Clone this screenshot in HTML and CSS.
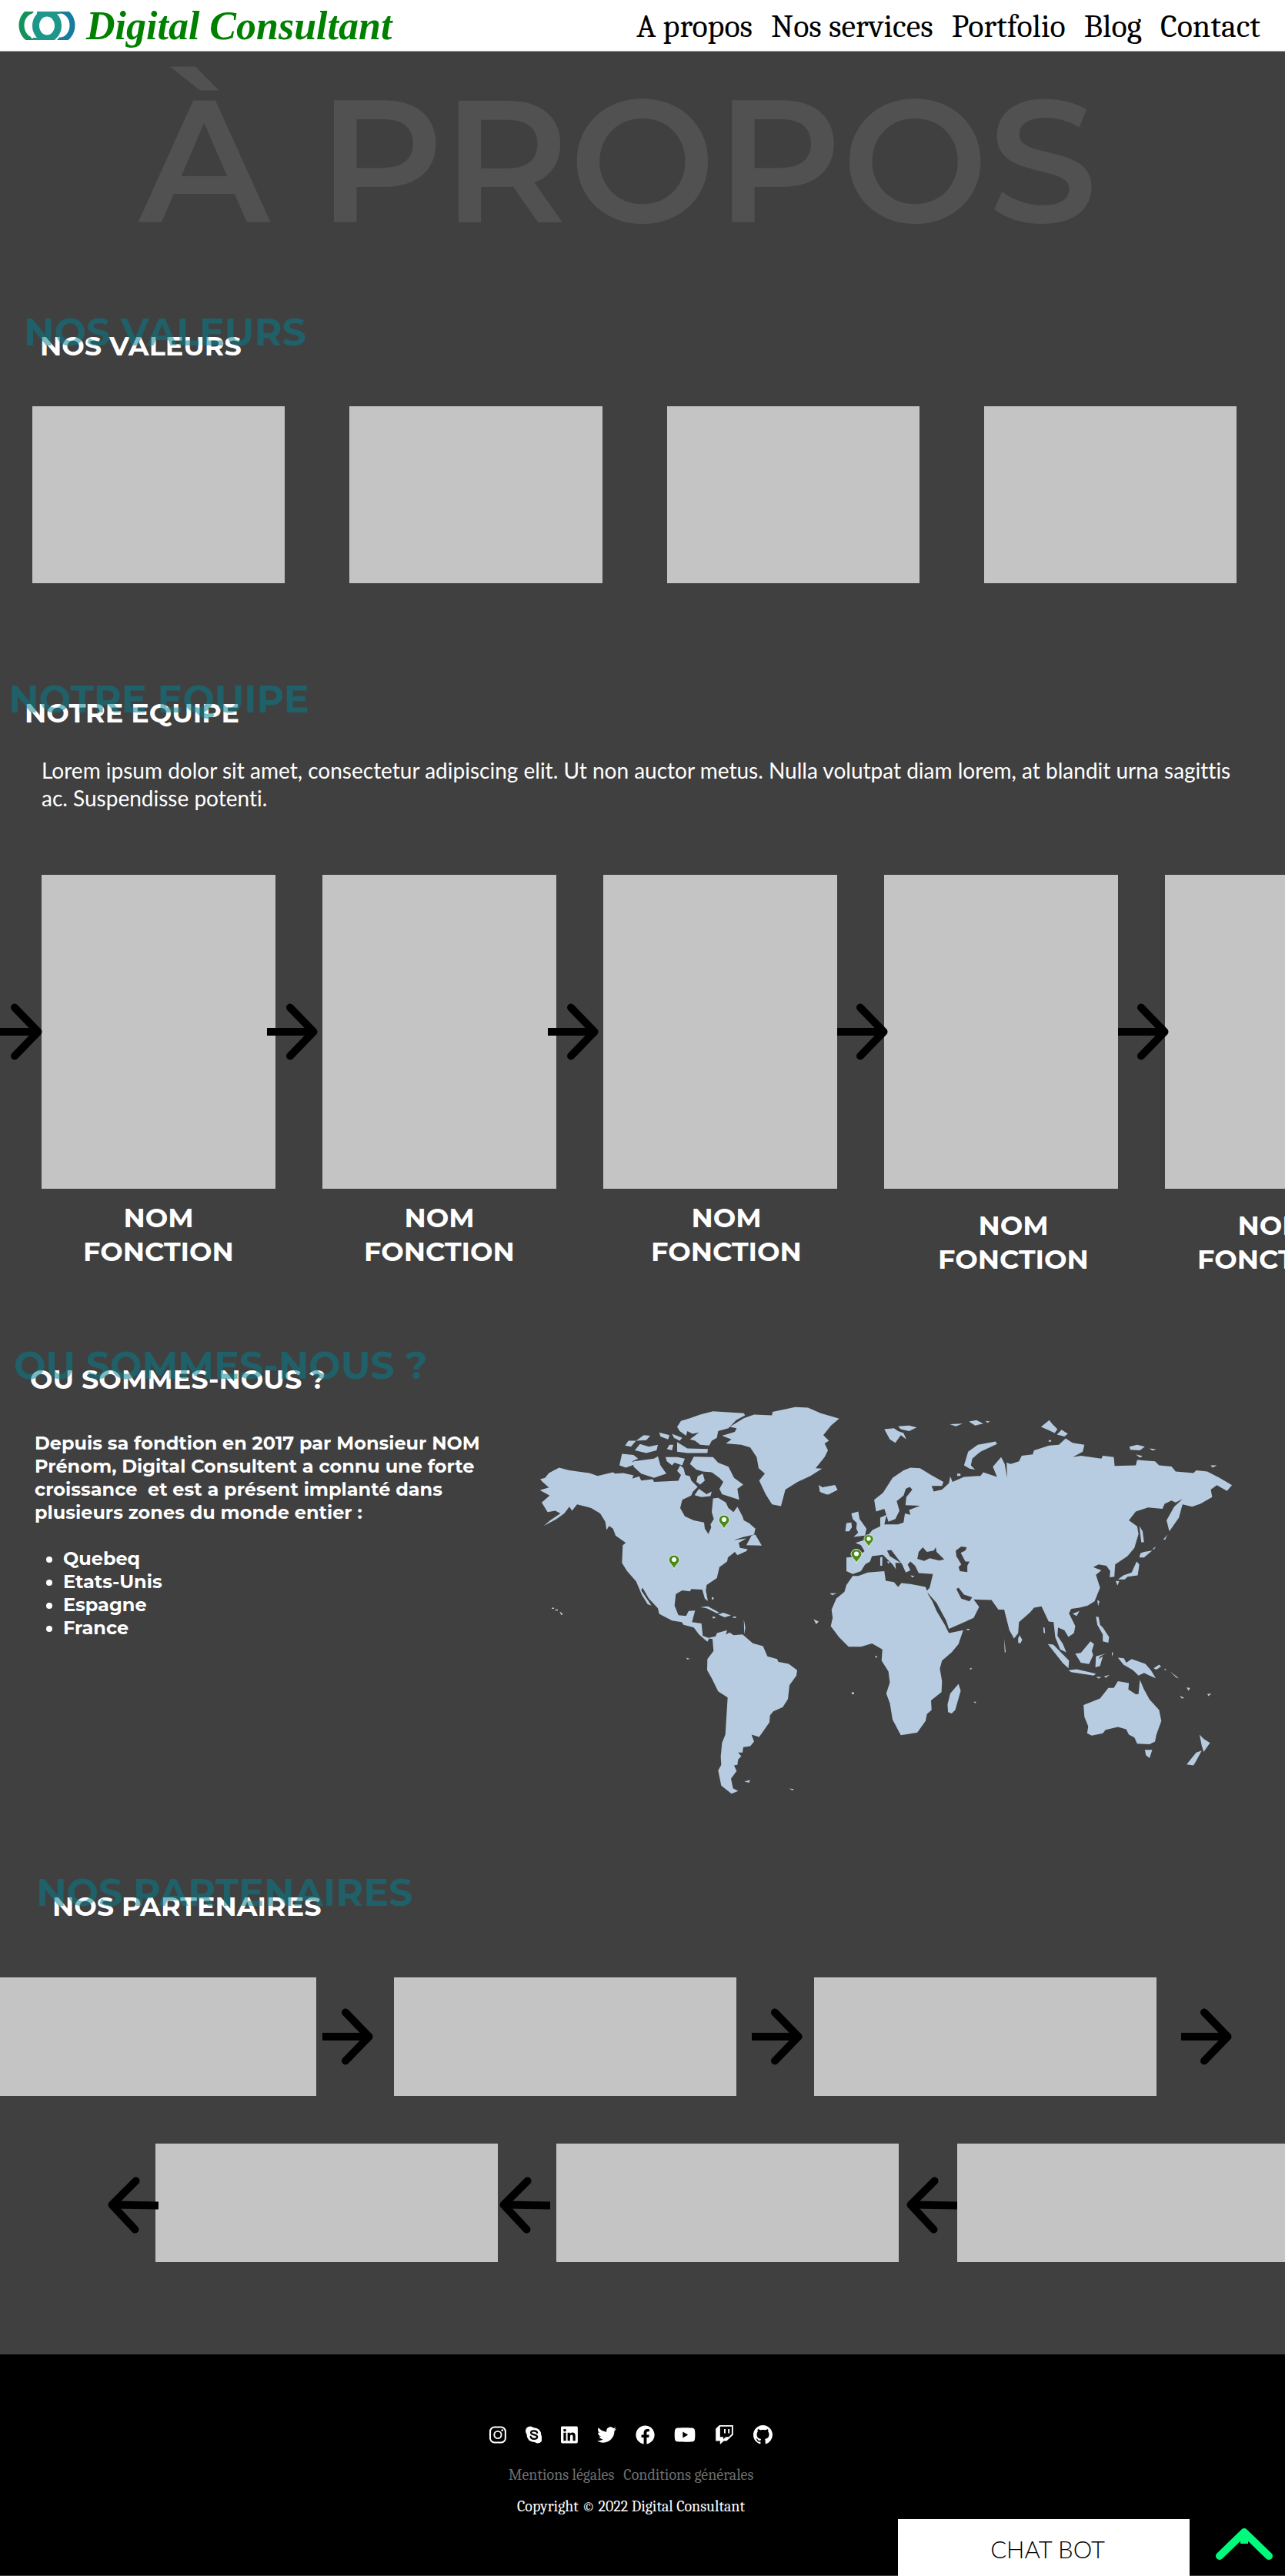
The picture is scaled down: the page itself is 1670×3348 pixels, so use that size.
FILE: index.html
```html
<!DOCTYPE html>
<html lang="fr">
<head>
<meta charset="utf-8">
<meta name="viewport" content="width=device-width, initial-scale=1">
<title>Digital Consultant - À propos</title>
<link rel="stylesheet" href="styles.css">
</head>
<body>
<svg class="sprite" aria-hidden="true">
  <symbol id="arrow" viewBox="0 0 66 74">
    <path d="M0 37H58" fill="none" stroke="currentColor" stroke-width="10"/>
    <path d="M30 5.500L60.500 37L30 68.500" fill="none" stroke="currentColor" stroke-width="10" stroke-linecap="round" stroke-linejoin="round"/>
  </symbol>
  <symbol id="arrow-left" viewBox="0 0 66 74">
    <g transform="rotate(181 33 37)">
      <path d="M0 37H58" fill="none" stroke="currentColor" stroke-width="10"/>
      <path d="M30 5.500L60.500 37L30 68.500" fill="none" stroke="currentColor" stroke-width="10" stroke-linecap="round" stroke-linejoin="round"/>
    </g>
  </symbol>
  <symbol id="pin" viewBox="0 0 16 20">
    <path d="M8 19C6 14 1 11 1 7.500A7 6.500 0 0 1 15 7.500C15 11 10 14 8 19Z" fill="#4a8a1c" stroke="#e4f0d8" stroke-width="1"/>
    <circle cx="8" cy="7" r="3" fill="#fff"/>
  </symbol>
</svg>

<header class="topbar">
  <a class="brand" href="#">
    <svg class="brand-mark" viewBox="0 0 74 37" aria-hidden="true">
      <ellipse cx="20" cy="18" rx="16" ry="19" fill="none" stroke="#14925c" stroke-width="7"/>
      <ellipse cx="54" cy="18" rx="16" ry="19" fill="none" stroke="#177d9c" stroke-width="7"/>
      <ellipse cx="37" cy="18.500" rx="20" ry="21" fill="#fff"/>
      <path d="M24 0H20L13 9L11 22L17 35H24ZM50 3H53L60 11V26L50 37H48Z" fill="#fff"/>
      <ellipse cx="37" cy="18.500" rx="14.500" ry="16.500" fill="none" stroke="#1c978a" stroke-width="9"/>
      <path d="M24 0H54V3H24ZM19 34H46V37H19Z" fill="#1c978a"/>
    </svg>
    <span class="brand-name">Digital Consultant</span>
  </a>
  <nav class="nav" aria-label="Navigation principale">
    <a href="#">A propos</a>
    <a href="#">Nos services</a>
    <a href="#">Portfolio</a>
    <a href="#">Blog</a>
    <a href="#">Contact</a>
  </nav>
</header>

<main>
  <h1 class="hero">À PROPOS</h1>

  <section class="values">
    <h2 class="title title--values">NOS VALEURS<span class="ghost" aria-hidden="true">NOS VALEURS</span></h2>
    <div class="values-grid">
      <div class="box"></div>
      <div class="box"></div>
      <div class="box"></div>
      <div class="box"></div>
    </div>
  </section>

  <section class="team">
    <h2 class="title title--team">NOTRE EQUIPE<span class="ghost" aria-hidden="true">NOTRE EQUIPE</span></h2>
    <p class="intro">Lorem ipsum dolor sit amet, consectetur adipiscing elit. Ut non auctor metus. Nulla volutpat diam lorem, at blandit urna sagittis ac. Suspendisse potenti.</p>
    <div class="team-strip">
      <figure class="member">
        <div class="portrait">
          <svg class="arrow arrow--before" aria-hidden="true"><use href="#arrow"/></svg>
          <svg class="arrow arrow--overlap" aria-hidden="true"><use href="#arrow"/></svg>
        </div>
        <figcaption class="caption">NOM<br>FONCTION</figcaption>
      </figure>
      <figure class="member">
        <div class="portrait"><svg class="arrow arrow--overlap" aria-hidden="true"><use href="#arrow"/></svg></div>
        <figcaption class="caption">NOM<br>FONCTION</figcaption>
      </figure>
      <figure class="member">
        <div class="portrait"><svg class="arrow" aria-hidden="true"><use href="#arrow"/></svg></div>
        <figcaption class="caption caption--right">NOM<br>FONCTION</figcaption>
      </figure>
      <figure class="member">
        <div class="portrait"><svg class="arrow" aria-hidden="true"><use href="#arrow"/></svg></div>
        <figcaption class="caption caption--far-right caption--low">NOM<br>FONCTION</figcaption>
      </figure>
      <figure class="member">
        <div class="portrait"></div>
        <figcaption class="caption caption--left caption--low">NOM<br>FONCTION</figcaption>
      </figure>
    </div>
  </section>

  <section class="places">
    <div class="places-text">
      <h2 class="title">OU SOMMES-NOUS ?<span class="ghost" aria-hidden="true">OU SOMMES-NOUS ?</span></h2>
      <div class="story">
        <p>Depuis sa fondtion en 2017 par Monsieur NOM Prénom, Digital Consultent a connu une forte croissance&nbsp; et est a présent implanté dans plusieurs zones du monde entier :</p>
        <ul>
          <li>Quebeq</li>
          <li>Etats-Unis</li>
          <li>Espagne</li>
          <li>France</li>
        </ul>
      </div>
    </div>
    <svg class="map" viewBox="0 0 940 560" role="img" aria-label="Carte du monde de nos implantations">
      <g fill="#b7cce1">
        <!-- Americas and Greenland -->
        <g transform="scale(.33333 .35714)">
          <path d="M66 340L85 335L100 318L140 298L180 308L240 316L258 318L290 328L318 322L350 315L358 320L390 318L430 326L425 338L452 330L460 345L505 340L510 350L560 348L605 346L615 325L600 310L612 290L625 300L632 325L650 330L655 345L680 368L662 385L655 400L620 415L612 445L630 475L665 490L705 498L708 520L722 540L733 515L730 505L743 485L735 460L740 410L760 408L790 425L800 445L820 460L835 440L855 475L860 490L880 500L905 520L900 542L860 550L820 562L870 556L840 572L845 590L875 595L870 602L835 617L825 605L798 625L795 640L765 660L755 700L715 725L712 745L720 783L708 775L698 742L655 740L650 748L620 745L595 758L590 800L605 835L635 838L645 820L670 818L658 860L695 865L700 910L722 918L750 912L755 900L795 890L790 905L805 898L820 908L855 905L895 937L935 948L952 985L990 995L995 1005L1035 1012L1068 1035L1065 1055L1038 1090L1032 1140L1012 1170L975 1185L962 1200L960 1225L920 1278L890 1270L900 1295L885 1312L858 1315L855 1335L838 1335L850 1348L838 1360L835 1380L822 1382L832 1402L810 1430L818 1465L838 1475L812 1485L772 1455L760 1400L772 1380L770 1350L775 1300L788 1270L797 1135L760 1112L735 1065L717 1035L718 995L742 965L738 922L725 920L718 932L685 905L665 880L625 870L618 860L580 855L530 830L525 810L490 775L465 735L460 745L500 800L485 795L462 760L440 712L405 675L385 645L388 580L400 572L360 545L350 520L335 510L325 525L320 495L300 465L265 445L210 432L190 455L180 440L160 465L130 485L80 510L105 490L145 465L125 455L95 460L72 425L103 400L65 380L100 370L75 350Z"/>
          <path d="M972 95L1060 78L1110 80L1160 100L1232 120L1200 145L1170 180L1192 200L1175 210L1188 235L1175 260L1140 300L1165 302L1120 328L1070 350L1022 378L1005 438L970 432L945 395L920 345L942 320L918 300L910 260L885 225L850 215L790 210L812 195L775 182L825 168L832 155L805 150L860 118L900 105L970 108Z"/>
          <path d="M600 150L615 128L650 118L690 105L740 93L860 100L865 108L830 125L800 155L760 165L755 190L735 200L725 218L690 215L670 200L650 195L685 170L660 175L640 165L635 182L610 165Z"/>
          <path d="M397 218L410 200L440 200L420 222ZM435 235L455 212L490 222L525 215L520 235L480 245ZM440 200L470 180L495 182L480 198ZM530 170L570 180L565 195L535 185ZM570 215L585 215L580 235L560 230ZM600 205L640 228L720 230L718 245L640 245L600 240ZM580 175L620 190L610 200L588 190Z"/>
          <path d="M375 290L385 248L430 252L448 265L425 275L440 285L400 298ZM430 275L510 265L525 257L535 290L558 320L510 335L460 320L430 295ZM555 260L600 260L630 265L620 290L590 280L580 290L560 275Z"/>
          <path d="M650 285L665 258L740 260L760 280L800 295L822 335L858 360L835 375L842 415L810 405L775 395L765 375L780 350L765 335L735 315L700 312L675 305ZM680 330L700 320L708 345L690 360L675 350ZM668 398L685 375L715 395L735 385L730 402L695 405Z"/>
          <path d="M1152 362L1165 370L1212 362L1226 378L1190 396L1160 388ZM890 545L905 542L930 582L870 580ZM690 806L720 803L765 826L755 828L715 810ZM760 832L780 826L810 836L785 843ZM738 841H748V846H738ZM818 840H830V845H818ZM735 770H742V778H735ZM860 850L866 880L862 905ZM142 822L155 830L148 835ZM862 1440L885 1435L880 1445ZM1037 1466L1055 1468L1050 1473ZM635 990L650 994L640 996ZM1282 1118H1289V1123H1282ZM1195 755L1222 755L1205 762ZM1132 850L1152 858L1142 868ZM112 808H120V812H112ZM125 814H135V818H125Z"/>
        </g>
        <!-- Europe, Asia, Africa and Oceania -->
        <g transform="translate(380 0) scale(.35714)">
          <path d="M135 692L155 692L190 680L250 675L255 710L285 715L300 732L312 718L345 722L400 732L410 760L425 785L440 820L470 870L485 900L537 890L520 940L495 970L460 1000L452 1030L460 1075L458 1115L420 1145L422 1180L405 1195L400 1220L370 1262L310 1272L280 1215L270 1155L257 1120L270 1080L265 1040L240 1000L243 960L205 938L165 950L120 950L85 915L55 875L62 845L58 815L75 775L105 750L112 725Z"/>
          <path d="M112 625L150 622L178 602L165 580L145 572L175 562L207 525L235 512L235 480L258 470L250 505L300 505L320 498L325 465L345 470L340 452L380 437L327 435L330 405L352 378L342 368L328 375L320 400L295 420L305 455L290 485L265 495L250 448L220 458L213 415L245 390L280 335L320 308L345 298L380 300L420 325L465 350L460 365L422 365L430 385L460 378L485 355L490 330L498 350L540 332L600 328L610 315L660 332L645 295L675 260L688 285L697 335L695 280L710 285L740 275L750 255L790 250L795 235L850 218L885 215L910 192L935 208L978 215L972 240L936 260L965 255L1040 265L1045 255L1085 260L1088 292L1165 290L1170 270L1235 275L1250 290L1295 294L1310 312L1375 318L1385 308L1425 312L1470 335L1515 362L1497 383L1460 362L1438 378L1443 405L1400 430L1370 440L1335 432L1322 480L1287 530L1277 490L1305 440L1335 412L1310 425L1295 418L1270 430L1262 448L1210 443L1165 458L1140 490L1170 512L1175 540L1160 590L1135 620L1090 650L1087 695L1070 697L1072 675L1058 655L1030 650L1010 660L1040 672L1020 688L1035 735L1015 785L990 800L960 808L930 812L922 828L945 875L940 900L920 914L905 890L882 880L880 910L900 940L912 970L890 960L872 915L866 860L848 858L822 803L795 808L780 825L740 860L737 900L722 920L705 890L686 815L665 815L640 780L575 778L595 805L575 845L530 865L485 885L475 855L440 790L403 748L415 735L427 685L375 682L362 655L345 640L335 650L345 672L328 680L315 650L275 598L260 600L270 620L310 645L290 645L292 668L280 650L245 615L205 620L198 640L180 650L165 675L135 685L112 675Z"/>
          <path d="M250 158L285 155L300 165L320 172L330 195L310 180L290 208L270 195ZM300 148L340 145L368 152L340 165L310 158ZM540 290L555 240L590 215L655 203L660 212L600 240L570 265L565 290L580 305L560 302ZM488 140L535 138L510 148ZM558 130L585 125L610 138L580 145ZM618 128L635 130L625 135ZM820 150L850 125L862 140L880 158L870 172L845 160ZM878 178L895 160L918 175L905 185ZM1142 222L1170 215L1198 222L1180 235L1145 233ZM1215 228L1240 232L1225 236ZM1165 250L1190 256L1180 262ZM1437 290H1460L1445 298ZM515 320H527V328H515ZM848 198H857V204H848Z"/>
          <path d="M130 465L155 458L160 485L185 520L180 545L138 550L155 535L148 520L150 500L135 485ZM108 530L112 500L130 498L132 515L122 530ZM12 362L25 370L72 362L78 380L40 396L15 385ZM235 625L243 622L242 655L235 655ZM260 640L270 640L265 648ZM345 690L360 692L352 698Z"/>
          <path d="M480 1160L490 1120L520 1085L528 1110L508 1180L495 1193L482 1188ZM737 920L742 908L752 925L745 938L737 935ZM1025 780L1033 785L1028 802ZM1020 840L1030 842L1035 870L1045 880L1068 915L1065 935L1045 930L1045 905L1025 870ZM935 830L960 820L950 838ZM1178 510L1190 530L1195 570L1185 570ZM1182 610L1195 605L1225 600L1195 625L1178 625ZM1168 640L1178 650L1172 690L1135 695L1125 705L1100 705L1120 690L1150 680ZM1092 710L1105 712L1098 727ZM1225 595L1238 585L1232 595ZM1265 560L1280 542L1272 560Z"/>
          <path d="M845 940L865 942L922 1000L920 1028L900 1010ZM920 1035L950 1032L1020 1048L1012 1055L930 1042ZM945 975L965 972L1000 930L1013 940L1005 965L1010 980L995 1013L965 1008ZM1020 985L1055 975L1035 985L1030 995L1045 985L1035 1020L1018 1025ZM1100 990L1122 992L1130 1008L1150 995L1200 1012L1220 1035L1238 1065L1215 1055L1195 1045L1175 1055L1155 1035L1120 1015ZM1050 1058L1070 1052L1055 1063ZM1230 1028L1250 1015L1257 1022L1240 1033ZM1020 1060L1040 1060L1030 1066ZM1078 968L1083 975L1078 985ZM828 880H833L835 900H830Z"/>
          <path d="M975 1162L1035 1138L1065 1100L1085 1100L1100 1075L1140 1082L1138 1105L1165 1123L1175 1122L1180 1070L1195 1105L1215 1142L1250 1180L1258 1220L1240 1270L1235 1295L1215 1305L1170 1303L1160 1280L1140 1270L1130 1250L1100 1242L1055 1252L1045 1265L1005 1273L988 1265L992 1240L978 1205ZM1198 1325L1225 1325L1215 1355L1202 1345ZM1397 1270L1412 1285L1435 1300L1412 1333L1405 1310ZM1350 1378L1385 1335L1405 1328L1385 1365L1375 1382ZM1350 1098L1363 1100L1357 1110ZM1325 1128L1342 1137L1332 1138ZM1425 1122L1440 1120L1430 1130ZM1270 1030L1278 1034L1270 1035ZM1290 1040L1322 1065L1312 1062ZM575 1150L585 1150L580 1156ZM560 1030L570 1026L565 1034ZM686 920L692 970L688 970ZM550 885H560V889H550ZM217 984H224V989H217ZM131 1116H140V1121H131Z"/>
        </g>
      </g>
      <!-- Inland seas -->
      <g transform="translate(380 0) scale(.35714)" fill="#404040">
        <path d="M370 630L375 605L390 588L405 605L430 600L437 588L440 605L468 632L450 636L415 628L395 638ZM510 600L530 585L550 588L545 600L528 608L545 640L560 640L552 655L552 678L525 675L520 660L530 650L512 620ZM512 740L520 735L540 760L570 770L560 785L530 775Z"/>
      </g>
      <use href="#pin" x="188" y="219" width="16" height="20"/>
      <use href="#pin" x="253" y="167" width="16" height="20"/>
      <use href="#pin" x="425" y="211" width="16" height="21"/>
      <use href="#pin" x="442" y="192" width="14" height="19"/>
    </svg>
  </section>

  <section class="partners">
    <h2 class="title title--partners">NOS PARTENAIRES<span class="ghost" aria-hidden="true">NOS PARTENAIRES</span></h2>
    <div class="partner-row partner-row--right">
      <div class="partner"><svg class="arrow arrow--near" aria-hidden="true"><use href="#arrow"/></svg></div>
      <div class="partner"><svg class="arrow arrow--mid" aria-hidden="true"><use href="#arrow"/></svg></div>
      <div class="partner"><svg class="arrow arrow--far" aria-hidden="true"><use href="#arrow"/></svg></div>
    </div>
    <div class="partner-row partner-row--left">
      <div class="partner"><svg class="arrow arrow--back arrow--back-overlap" aria-hidden="true"><use href="#arrow-left"/></svg></div>
      <div class="partner"><svg class="arrow arrow--back arrow--back-near" aria-hidden="true"><use href="#arrow-left"/></svg></div>
      <div class="partner"><svg class="arrow arrow--back" aria-hidden="true"><use href="#arrow-left"/></svg></div>
    </div>
  </section>
</main>

<footer class="footer">
  <div class="social">
    <a href="#" aria-label="Instagram"><svg viewBox="0 0 448 512"><rect x="21" y="53" width="406" height="406" rx="112" fill="none" stroke="currentColor" stroke-width="42"/><circle cx="224" cy="256" r="95" fill="none" stroke="currentColor" stroke-width="40"/><circle cx="343" cy="137" r="27" fill="currentColor"/></svg></a>
    <a href="#" aria-label="Skype"><svg viewBox="0 0 448 512"><circle cx="224" cy="256" r="192" fill="currentColor"/><circle cx="124" cy="156" r="124" fill="currentColor"/><circle cx="324" cy="356" r="124" fill="currentColor"/><path d="M310 200C290 130 145 135 145 200C145 270 312 235 312 312C312 385 150 385 136 302" fill="none" stroke="#000" stroke-width="46" stroke-linecap="round"/></svg></a>
    <a href="#" aria-label="LinkedIn"><svg viewBox="0 0 448 512"><path fill="currentColor" d="M416 32H31.900C14.300 32 0 46.500 0 64.300v383.400C0 465.500 14.300 480 31.900 480H416c17.600 0 32-14.500 32-32.300V64.300c0-17.800-14.400-32.300-32-32.300zM135.400 416H69V202.200h66.500V416zm-33.200-243c-21.300 0-38.500-17.300-38.500-38.500S80.900 96 102.200 96c21.200 0 38.500 17.300 38.500 38.500 0 21.300-17.200 38.500-38.500 38.500zm282.100 243h-66.400V312c0-24.800-.5-56.700-34.500-56.700-34.600 0-39.900 27-39.900 54.900V416h-66.400V202.200h63.700v29.200h.9c8.900-16.800 30.600-34.500 62.900-34.500 67.200 0 79.700 44.300 79.700 101.900V416z"/></svg></a>
    <a href="#" aria-label="Twitter"><svg viewBox="0 0 512 512"><path fill="currentColor" d="M459.370 151.716c.325 4.548.325 9.097.325 13.645 0 138.720-105.583 298.558-298.558 298.558-59.452 0-114.680-17.219-161.137-47.106 8.447.974 16.568 1.299 25.340 1.299 49.055 0 94.213-16.568 130.274-44.832-46.132-.975-84.792-31.188-98.112-72.772 6.498.974 12.995 1.624 19.818 1.624 9.421 0 18.843-1.300 27.614-3.573-48.081-9.747-84.143-51.980-84.143-102.985v-1.299c13.969 7.797 30.214 12.670 47.431 13.319-28.264-18.843-46.781-51.005-46.781-87.391 0-19.492 5.197-37.360 14.294-52.954 51.655 63.675 129.300 105.258 216.365 109.807-1.624-7.797-2.599-15.918-2.599-24.040 0-57.828 46.782-104.934 104.934-104.934 30.213 0 57.502 12.670 76.670 33.137 23.715-4.548 46.456-13.320 66.599-25.340-7.798 24.366-24.366 44.833-46.132 57.827 21.117-2.273 41.584-8.122 60.426-16.243-14.292 20.791-32.161 39.308-52.628 54.253z"/></svg></a>
    <a href="#" aria-label="Facebook"><svg viewBox="0 0 512 512"><path fill="currentColor" d="M504 256C504 119 393 8 256 8S8 119 8 256c0 123.780 90.690 226.380 209.250 245V327.690h-63V256h63v-54.640c0-62.150 37-96.480 93.670-96.480 27.140 0 55.520 4.840 55.520 4.840v61h-31.280c-30.800 0-40.410 19.120-40.410 38.730V256h68.780l-11 71.690h-57.780V501C413.310 482.380 504 379.780 504 256z"/></svg></a>
    <a href="#" aria-label="YouTube"><svg viewBox="0 0 576 512"><path fill="currentColor" d="M549.655 124.083c-6.281-23.650-24.787-42.276-48.284-48.597C458.781 64 288 64 288 64S117.220 64 74.629 75.486c-23.497 6.322-42.003 24.947-48.284 48.597-11.412 42.867-11.412 132.305-11.412 132.305s0 89.438 11.412 132.305c6.281 23.650 24.787 41.500 48.284 47.821C117.220 448 288 448 288 448s170.780 0 213.371-11.486c23.497-6.321 42.003-24.171 48.284-47.821 11.412-42.867 11.412-132.305 11.412-132.305s0-89.438-11.412-132.305zm-317.510 213.508V175.185l142.739 81.205-142.739 81.201z"/></svg></a>
    <a href="#" aria-label="Twitch"><svg viewBox="0 0 512 512"><path fill="currentColor" d="M391.170 103.470H352.540v109.700h38.630ZM285 103H246.370V212.750H285ZM120.830 0L24.310 91.420V420.580H140.140V512l96.530-91.420h77.250L487.690 256V0ZM449.070 237.750l-77.220 73.120H294.610l-67.600 64v-64H140.140V36.580H449.070Z"/></svg></a>
    <a href="#" aria-label="GitHub"><svg viewBox="0 0 16 16"><path fill="currentColor" d="M8 0C3.580 0 0 3.580 0 8c0 3.540 2.290 6.530 5.470 7.590.4.070.55-.17.55-.38 0-.19-.01-.82-.01-1.490-2.010.37-2.530-.49-2.690-.94-.09-.23-.48-.94-.82-1.130-.28-.15-.68-.52-.01-.53.63-.01 1.080.58 1.230.82.72 1.210 1.870.87 2.330.66.070-.52.28-.87.51-1.070-1.780-.2-3.640-.89-3.640-3.950 0-.87.31-1.590.82-2.150-.08-.2-.36-1.020.08-2.120 0 0 .67-.21 2.200.82.64-.18 1.320-.27 2-.27s1.360.09 2 .27c1.530-1.040 2.200-.82 2.200-.82.44 1.100.16 1.920.08 2.120.51.56.82 1.270.82 2.150 0 3.070-1.870 3.750-3.650 3.950.29.25.54.73.54 1.480 0 1.070-.01 1.930-.01 2.200 0 .21.15.46.55.38A8.010 8.010 0 0 0 16 8c0-4.420-3.580-8-8-8z"/></svg></a>
  </div>
  <nav class="legal" aria-label="Informations légales">
    <a href="#">Mentions légales</a>
    <a href="#">Conditions générales</a>
  </nav>
  <p class="copyright">Copyright © 2022 Digital Consultant</p>
</footer>

<div class="dock">
  <button class="chat" type="button">CHAT BOT</button>
  <a class="to-top" href="#" aria-label="Haut de page">
    <svg viewBox="0 0 74 42" aria-hidden="true">
      <path d="M5 37L37 6L69 37" fill="none" stroke="#00fa7c" stroke-width="10" stroke-linecap="round" stroke-linejoin="round"/>
      <path d="M32 8H42V21H32Z" fill="#00fa7c"/>
    </svg>
  </a>
</div>
</body>
</html>
```
FILE: styles.css
```css
* {
  box-sizing: border-box;
}

body {
  margin: 0;
  background: #404040;
  color: #fff;
  font-family: Montserrat, Inter, sans-serif;
}

h1, h2, p, ul, figure {
  margin: 0;
}

a {
  color: inherit;
  text-decoration: none;
}

.sprite {
  display: none;
}

/* Header */
.topbar {
  display: flex;
  align-items: center;
  justify-content: space-between;
  height: 67px;
  padding: 0 32px 0 24px;
  border-bottom: 1px solid #aab4b0;
  background: #fff;
}

.brand {
  display: flex;
  align-items: center;
  gap: 14px;
  color: #008000;
  font-family: "Liberation Serif", serif;
}

.brand-mark {
  width: 74px;
  height: 37px;
}

.brand-name {
  padding-top: 2px;
  font-size: 52px;
  font-style: italic;
  font-weight: 700;
  line-height: 60px;
}

.nav {
  display: flex;
  gap: 24px;
  padding-top: 4px;
  color: #000;
  font-family: Cambria, Caladea, "Liberation Serif", serif;
  font-size: 42px;
  line-height: 56px;
}

/* Titles */
.hero {
  padding: 23px 0 0 181px;
  color: #515151;
  font-size: 226px;
  font-weight: 600;
  line-height: 236px;
  white-space: nowrap;
}

.title {
  position: relative;
  width: fit-content;
  font-size: 35px;
  font-weight: 700;
  line-height: 40px;
  white-space: nowrap;
}

.ghost {
  position: absolute;
  top: -23px;
  left: -21px;
  color: rgba(4, 124, 140, .53);
  font-size: 49px;
  line-height: 50px;
}

.title--values {
  margin-left: 52px;
}

.title--team {
  margin-left: 32px;
}

.title--partners {
  margin-left: 68px;
}

/* Values */
.values {
  padding-top: 104px;
}

.values-grid {
  display: grid;
  grid-template-columns: repeat(4, 1fr);
  gap: 84px;
  margin-top: 58px;
  padding: 0 63px 0 42px;
}

.box {
  height: 230px;
  background: #c4c4c4;
}

/* Team */
.team {
  padding-top: 149px;
  overflow: hidden;
}

.intro {
  margin-top: 36px;
  padding: 0 54px;
  font-family: Lato, sans-serif;
  font-size: 28px;
  font-variant-ligatures: none;
  line-height: 36px;
}

.team-strip {
  display: flex;
  gap: 61px;
  margin-top: 82px;
  padding-left: 54px;
}

.member {
  flex: 0 0 304px;
}

.portrait {
  position: relative;
  height: 408px;
  background: #c4c4c4;
}

.caption {
  margin-top: 16px;
  font-size: 35px;
  font-weight: 700;
  line-height: 44px;
  text-align: center;
}

.caption--right {
  padding-left: 16px;
}

.caption--far-right {
  padding-left: 32px;
}

.caption--left {
  padding-right: 24px;
}

.caption--low {
  margin-top: 26px;
}

/* Carousel arrows, laid over the gaps between tiles */
.arrow {
  position: absolute;
  top: 50%;
  left: 100%;
  z-index: 1;
  width: 66px;
  height: 74px;
  margin-top: -37px;
  color: #000;
}

.arrow--overlap {
  margin-left: -11px;
}

.arrow--before {
  left: -65px;
}

.arrow--near {
  margin-left: 8px;
}

.arrow--mid {
  margin-left: 20px;
}

.arrow--far {
  margin-left: 32px;
}

.arrow--back {
  right: 100%;
  left: auto;
  margin-top: -34px;
}

.arrow--back-overlap {
  margin-right: -4px;
}

.arrow--back-near {
  margin-right: 8px;
}

/* Places */
.places {
  display: flex;
  justify-content: space-between;
  padding: 114px 50px 0 39px;
}

.places-text {
  flex: 0 1 610px;
}

.story {
  margin-top: 48px;
  padding-left: 6px;
  font-size: 24px;
  font-weight: 700;
  line-height: 30px;
}

.story ul {
  margin-top: 30px;
  padding-left: 37px;
}

.map {
  flex: 0 1 940px;
  min-width: 0;
  height: 560px;
  margin-top: 28px;
}

/* Partners */
.partners {
  padding: 97px 0 120px;
  overflow: hidden;
}

.partner-row {
  display: flex;
}

.partner-row--right {
  gap: 101px;
  margin-top: 72px;
  margin-left: -34px;
}

.partner-row--left {
  gap: 76px;
  margin-top: 62px;
  margin-left: 202px;
}

.partner {
  position: relative;
  flex: 0 0 445px;
  height: 154px;
  background: #c4c4c4;
}

/* Footer */
.footer {
  display: flex;
  flex-direction: column;
  align-items: center;
  padding: 92px 30px 77px 0;
  background: #000;
  font-family: Cambria, Caladea, "Liberation Serif", serif;
  font-size: 20px;
  line-height: 24px;
}

.social {
  display: flex;
  gap: 25px;
  height: 25px;
}

.social svg {
  display: block;
  height: 25px;
}

.legal {
  display: flex;
  gap: 12px;
  margin-top: 28px;
  color: #6c6c6c;
}

.copyright {
  margin-top: 17px;
}

/* Floating controls */
.dock {
  position: fixed;
  right: 16px;
  bottom: 0;
  display: flex;
  align-items: center;
  gap: 34px;
}

.chat {
  width: 379px;
  height: 74px;
  padding: 4px 0 0 10px;
  border: 0;
  background: #fff;
  color: #000;
  font-family: Lato, sans-serif;
  font-size: 31px;
  font-weight: 300;
}

.to-top svg {
  display: block;
  width: 74px;
  height: 42px;
  margin-bottom: 10px;
}
```
